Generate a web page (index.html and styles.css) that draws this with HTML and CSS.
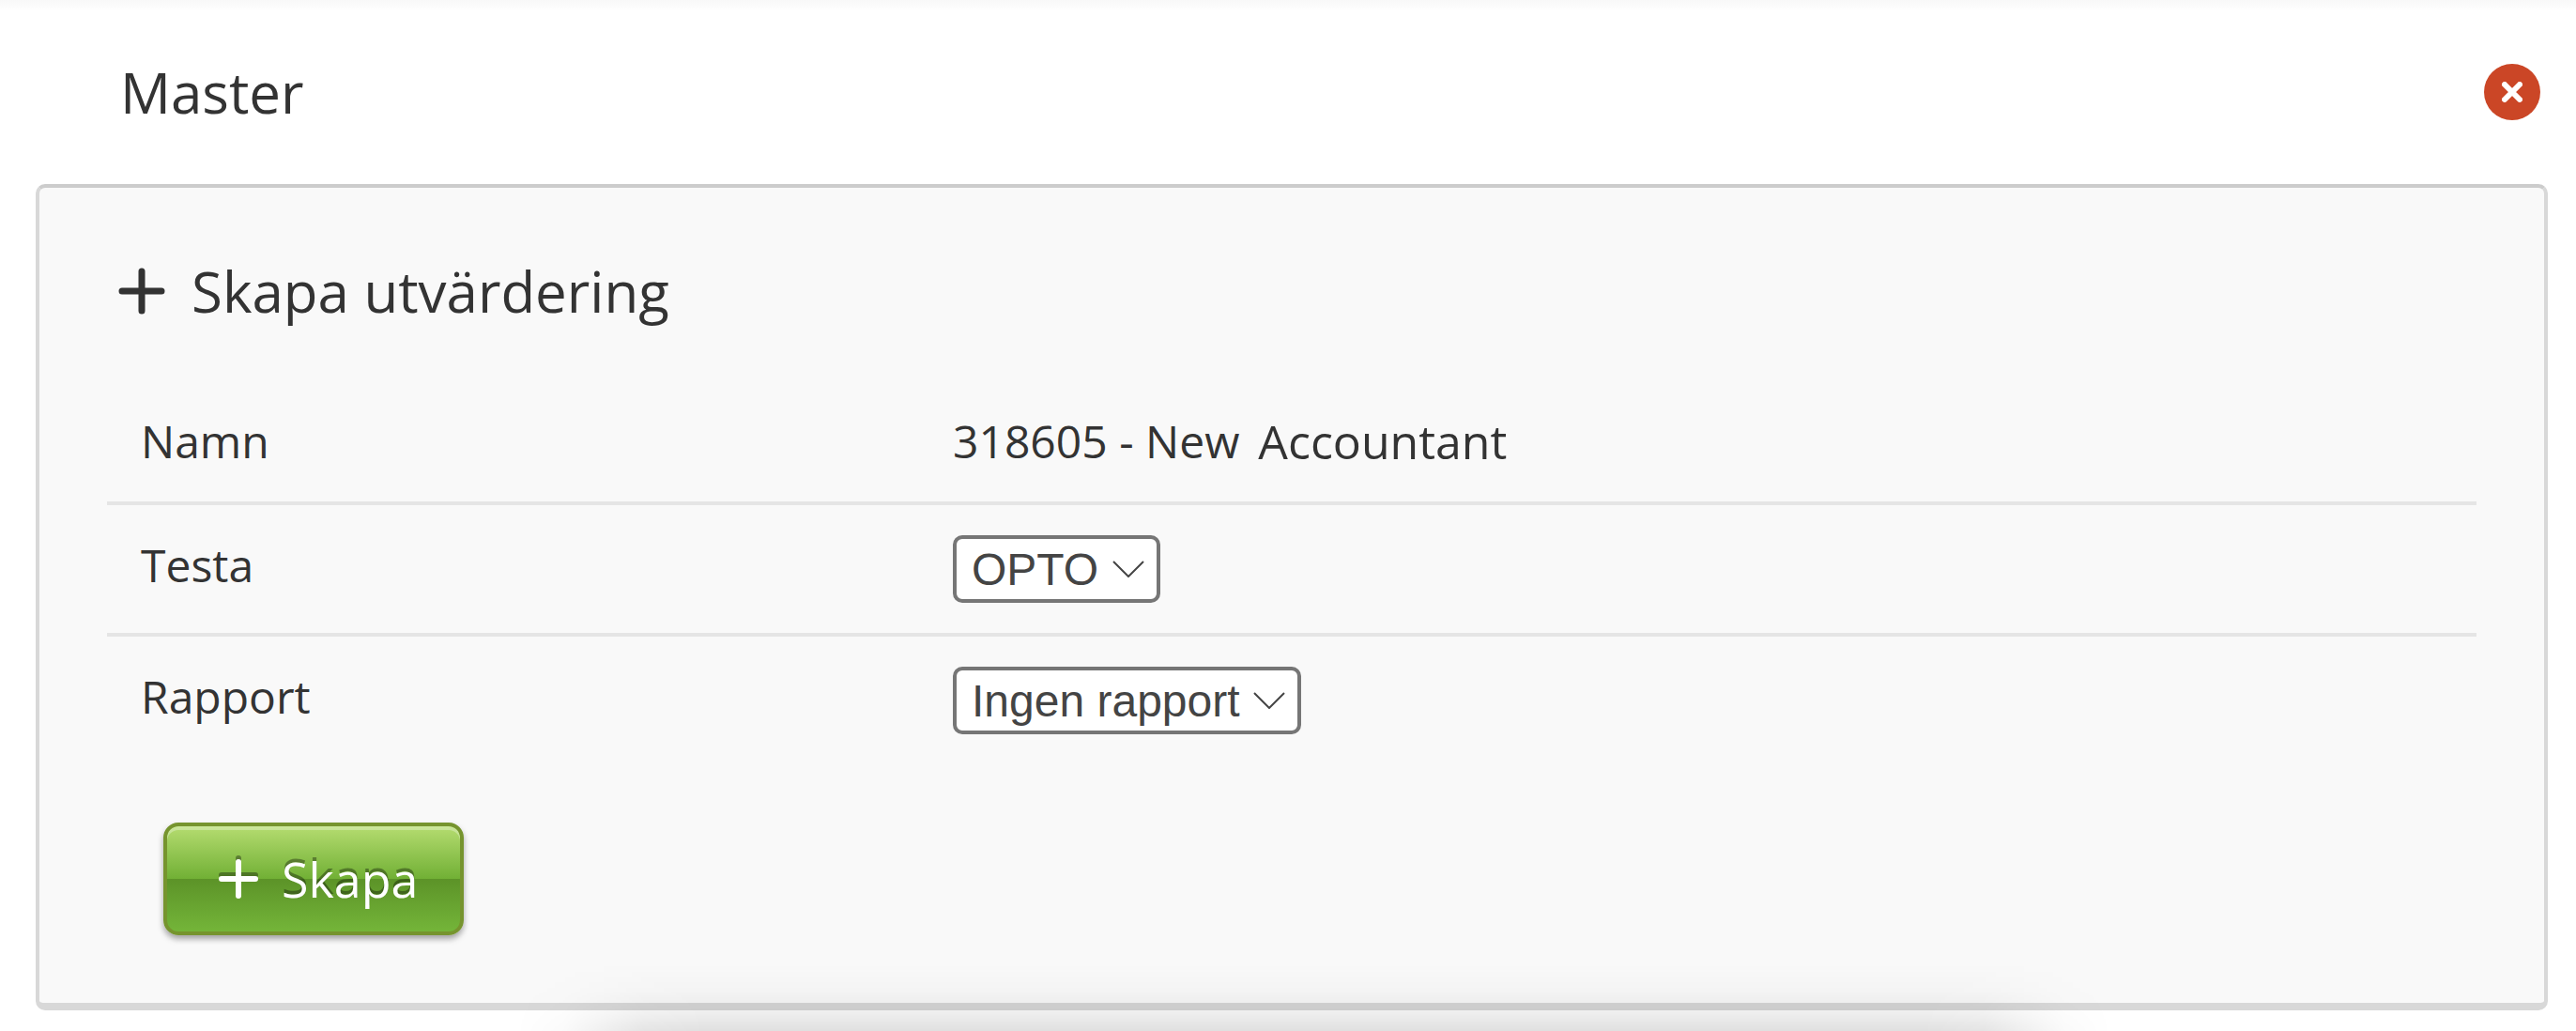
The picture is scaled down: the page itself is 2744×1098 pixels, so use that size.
FILE: index.html
```html
<!DOCTYPE html>
<html lang="sv">
<head>
  <meta charset="utf-8">
  <title>Master</title>
  <link rel="stylesheet" href="styles.css">
</head>
<body>
  <div class="dialog">
    <header class="dialog-header">
      <h1 class="heading">Master</h1>
      <button class="close" type="button" aria-label="Stäng">
        <svg class="close-icon" viewBox="0 0 22 22" aria-hidden="true"><path d="M3 3 19 19M19 3 3 19"/></svg>
      </button>
    </header>
    <form class="card">
      <h2 class="heading card-title">
        <svg class="plus" viewBox="0 0 50 50" aria-hidden="true"><path d="M4 25H46M25 4V46"/></svg>
        Skapa utvärdering
      </h2>
      <div class="fields">
        <div class="field">
          <span class="label">Namn</span>
          <span class="value"><span>318605 - New</span><span class="value-role">Accountant</span></span>
        </div>
        <div class="field">
          <label class="label" for="test">Testa</label>
          <span class="select-box">
            <select class="select" id="test"><option>OPTO</option></select>
            <svg class="chevron" viewBox="0 0 34 18" aria-hidden="true"><path d="M1 1 17 17 33 1"/></svg>
          </span>
        </div>
        <div class="field">
          <label class="label" for="report">Rapport</label>
          <span class="select-box">
            <select class="select" id="report"><option>Ingen rapport</option></select>
            <svg class="chevron" viewBox="0 0 34 18" aria-hidden="true"><path d="M1 1 17 17 33 1"/></svg>
          </span>
        </div>
      </div>
      <button class="create" type="button">
        <svg class="create-plus" viewBox="0 0 44 44" aria-hidden="true"><path d="M4 22H40M22 4V40"/></svg>
        Skapa
      </button>
    </form>
  </div>
  <div class="sheet-shadow"></div>
</body>
</html>
```
FILE: styles.css
```css
* {
  box-sizing: border-box;
}

body {
  margin: 0;
  min-height: 100vh;
  position: relative;
  background: #fff linear-gradient(#f8f8f8, #fff 12px) no-repeat;
  color: #333;
  font-family: "Open Sans", "Noto Sans", sans-serif;
  font-size: 48px;
  line-height: 64px;
}

.dialog {
  padding: 0 30px 22px 38px;
}

.dialog-header {
  display: flex;
  align-items: center;
  justify-content: space-between;
  height: 196px;
  padding: 0 8px 0 90px;
}

.heading {
  margin: 0;
  font-size: 60px;
  font-weight: 400;
  line-height: 84px;
}

.close {
  display: flex;
  align-items: center;
  justify-content: center;
  width: 60px;
  height: 60px;
  padding: 0;
  border: 0;
  border-radius: 50%;
  background: #cb4626;
}

.close-icon {
  width: 22px;
  height: 22px;
  fill: none;
  stroke: #fff;
  stroke-width: 6;
  stroke-linecap: round;
}

.card {
  border: 4px solid #d8d8d8;
  border-top-color: #ccc;
  border-bottom-width: 8px;
  border-radius: 10px;
  padding: 68px 72px 72px;
  background: #f9f9f9;
}

.card-title {
  display: flex;
  align-items: center;
  gap: 28px;
  padding-left: 12px;
}

.plus {
  width: 50px;
  height: 50px;
  fill: none;
  stroke: #333;
  stroke-width: 7;
  stroke-linecap: round;
}

.fields {
  margin-top: 54px;
}

.field {
  display: grid;
  grid-template-columns: 865px 1fr;
  align-items: start;
  padding: 32px 36px;
}

.field + .field {
  border-top: 4px solid #e5e5e5;
}

.value {
  display: flex;
  gap: 20px;
}

.value-role {
  font-size: 50px;
}

.select-box {
  display: grid;
  justify-self: start;
  align-items: center;
}

.select {
  grid-area: 1 / 1;
  appearance: none;
  height: 72px;
  margin: 0;
  padding: 0 61px 0 16px;
  border: 4px solid #767676;
  border-radius: 10px;
  background: #fff;
  color: #444;
  font-family: "Liberation Sans", Arial, sans-serif;
  font-size: 48px;
}

.chevron {
  grid-area: 1 / 1;
  justify-self: end;
  width: 34px;
  height: 18px;
  margin-right: 17px;
  fill: none;
  stroke: #444;
  stroke-width: 2;
  pointer-events: none;
}

.create {
  display: flex;
  align-items: center;
  gap: 24px;
  height: 120px;
  margin: 62px 0 0 60px;
  padding: 0 45px 0 54px;
  border: 4px solid #76942e;
  border-radius: 16px;
  background: linear-gradient(#b5dc70, #71b035 50%, #5c9328 50%, #74b539);
  box-shadow: 0 4px 6px rgba(0, 0, 0, 0.35), inset 0 4px 0 rgba(255, 255, 255, 0.3);
  color: #fff;
  font-family: inherit;
  font-size: 52px;
  line-height: 72px;
  text-shadow: 0 -4px 0 rgba(0, 0, 0, 0.35);
}

.create-plus {
  width: 44px;
  height: 44px;
  fill: none;
  stroke: #fff;
  stroke-width: 6;
  stroke-linecap: round;
  filter: drop-shadow(0 -4px 0 rgba(0, 0, 0, 0.35));
}

.sheet-shadow {
  position: absolute;
  bottom: 0;
  left: 20%;
  right: 18%;
  height: 72px;
  background: linear-gradient(transparent, rgba(0, 0, 0, 0.02) 40%, rgba(0, 0, 0, 0.06) 70%, rgba(0, 0, 0, 0.12));
  mask-image: linear-gradient(90deg, transparent, rgba(0, 0, 0, 0.15) 3%, rgba(0, 0, 0, 0.85) 8%, #000 12%, #000 88%, rgba(0, 0, 0, 0.85) 92%, rgba(0, 0, 0, 0.15) 97%, transparent);
  pointer-events: none;
}
```
